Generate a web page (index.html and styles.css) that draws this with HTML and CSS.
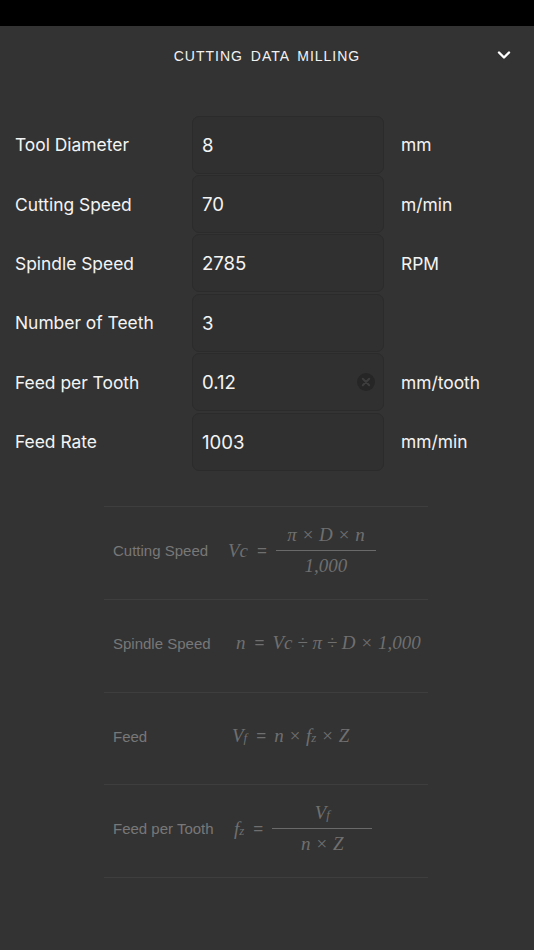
FILE: index.html
```html
<!DOCTYPE html>
<html>
<head>
<meta charset="utf-8">
<link rel="stylesheet" href="styles.css">
</head>
<body>
<div class="statusbar"></div>
<header class="header">
  <div class="title">CUTTING DATA MILLING</div>
  <svg class="chevron" width="14" height="10" viewBox="0 0 14 10"><path d="M2 2.5 L7 7.5 L12 2.5" fill="none" stroke="#fff" stroke-width="2.4" stroke-linecap="round" stroke-linejoin="round"/></svg>
</header>
<main class="form">
  <div class="row"><div class="label">Tool Diameter</div><div class="box"><span class="val">8</span></div><div class="unit">mm</div></div>
  <div class="row"><div class="label">Cutting Speed</div><div class="box"><span class="val">70</span></div><div class="unit">m/min</div></div>
  <div class="row"><div class="label">Spindle Speed</div><div class="box"><span class="val">2785</span></div><div class="unit">RPM</div></div>
  <div class="row"><div class="label">Number of Teeth</div><div class="box"><span class="val">3</span></div><div class="unit"></div></div>
  <div class="row"><div class="label">Feed per Tooth</div><div class="box"><span class="val">0.12</span><span class="clear"><svg width="18" height="18" viewBox="0 0 18 18"><circle cx="9" cy="9" r="9" fill="#262626"/><path d="M5.8 5.8 L12.2 12.2 M12.2 5.8 L5.8 12.2" stroke="#3d3d3d" stroke-width="2" stroke-linecap="round"/></svg></span></div><div class="unit">mm/tooth</div></div>
  <div class="row"><div class="label">Feed Rate</div><div class="box"><span class="val">1003</span></div><div class="unit">mm/min</div></div>
</main>
<section class="formulas">
  <div class="frow">
    <div class="flabel">Cutting Speed</div>
    <div class="formula"><span class="var">Vc</span><span class="eq">=</span>
      <span class="frac"><span class="num">π × D × n</span><span class="den">1,000</span></span></div>
  </div>
  <div class="frow">
    <div class="flabel">Spindle Speed</div>
    <div class="formula f2"><span class="var">n</span><span class="eq">=</span><span class="var">Vc ÷ π ÷ D × 1,000</span></div>
  </div>
  <div class="frow">
    <div class="flabel">Feed</div>
    <div class="formula f3"><span class="var">V<small>f</small></span><span class="eq">=</span><span class="var">n × f<small>z</small> × Z</span></div>
  </div>
  <div class="frow">
    <div class="flabel">Feed per Tooth</div>
    <div class="formula f4"><span class="var">f<small>z</small></span><span class="eq">=</span>
      <span class="frac"><span class="num">V<small>f</small></span><span class="den">n × Z</span></span></div>
  </div>
</section>
</body>
</html>
```
FILE: styles.css
```css
html, body {
  margin: 0;
  padding: 0;
  background: #333333;
  width: 534px;
  height: 950px;
  overflow: hidden;
  font-family: "Liberation Sans", Arial, sans-serif;
}
.statusbar {
  height: 26px;
  background: #000;
}
.header {
  height: 60px;
  display: flex;
  align-items: center;
  justify-content: center;
  position: relative;
}
.title {
  color: #f2f2f2;
  font-size: 14px;
  letter-spacing: 1px;
  word-spacing: 3px;
}
.chevron {
  position: absolute;
  right: 23px;
  top: 24px;
}
.form {
  padding-top: 29px;
}
.row {
  display: flex;
  align-items: center;
  height: 59.4px;
}
.label {
  width: 178px;
  padding-left: 15px;
  color: #f4f4f4;
  font-family: Inter, "Liberation Sans", sans-serif;
  font-size: 17.4px;
}
.box {
  width: 181px;
  height: 56px;
  border: 1px solid #2b2b2b;
  border-radius: 7px;
  background: #303030;
  display: flex;
  align-items: center;
  padding-left: 9px;
  box-sizing: content-box;
  margin-left: -1px;
}
.val {
  color: #f4f4f4;
  font-family: Inter, "Liberation Sans", sans-serif;
  font-size: 18.6px;
  flex: 1;
}
.clear {
  display: flex;
  margin-right: 8px;
}
.unit {
  padding-left: 17px;
  color: #f4f4f4;
  font-family: Inter, "Liberation Sans", sans-serif;
  font-size: 17.4px;
}
.formulas {
  margin: 35px 0 0 104px;
  width: 324px;
  border-top: 1px solid #3e3e3e;
}
.frow {
  height: 92.7px;
  border-bottom: 1px solid #3e3e3e;
  display: flex;
  align-items: center;
  padding-bottom: 5px;
  box-sizing: border-box;
}
.flabel {
  width: 115px;
  padding-left: 9px;
  color: #787878;
  font-size: 15px;
}
.formula {
  display: flex;
  align-items: center;
  color: #6f6f6f;
  font-family: "Liberation Serif", "Times New Roman", serif;
  font-style: italic;
  font-size: 19px;
}
.formula small { font-size: 13px; }
.eq {
  font-style: normal;
  font-family: "Liberation Sans", Arial, sans-serif;
  font-size: 17px;
  margin: 0 8px 0 9px;
}
.frac {
  display: flex;
  flex-direction: column;
  align-items: center;
  width: 100px;
  margin-left: 1px;
}
.num {
  padding-bottom: 4px;
  border-bottom: 1px solid #6a6a6a;
  width: 100%;
  text-align: center;
}
.den {
  padding-top: 4px;
}
.f2 { margin-left: 8px; }
.f3 { margin-left: 4px; }
.f4 { margin-left: 6px; }
```
